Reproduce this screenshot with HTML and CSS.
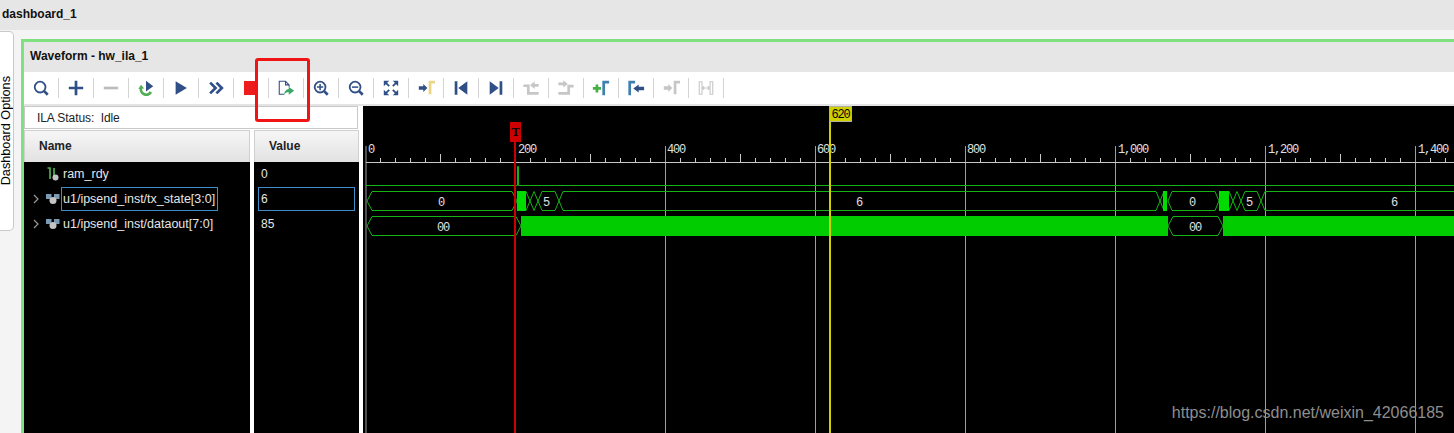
FILE: index.html
```html
<!DOCTYPE html>
<html lang="en">
<head>
<meta charset="utf-8">
<title>Waveform - hw_ila_1</title>
<link rel="stylesheet" href="styles.css">
</head>
<body>
<header class="top">dashboard_1</header>
<div class="main">
  <aside class="tab"><span class="tab-label">Dashboard Options</span></aside>
  <section class="panel">
    <div class="title">Waveform - hw_ila_1</div>
    <div class="toolbar">
      <div class="btn"><svg class="ic" viewBox="0 0 20 20"><circle cx="9" cy="9" r="6" class="s-blue"/><path d="M13.500 13.500l4 4" class="s-blue thick"/></svg></div>
      <div class="btn"><svg class="ic" viewBox="0 0 20 20"><path d="M2 10h16M10 2v16" class="s-blue thick"/></svg></div>
      <div class="btn"><svg class="ic" viewBox="0 0 20 20"><path d="M2 10h16" class="s-gray thick"/></svg></div>
      <div class="btn"><svg class="ic" viewBox="0 0 20 20"><path d="M4.500 10a6 6 0 0 0 11 4.500" class="s-green thick"/><path d="M1.500 11l3-4.500 3.500 4z" class="f-green"/><path d="M10 2l8 6-8 6z" class="f-blue"/></svg></div>
      <div class="btn"><svg class="ic" viewBox="0 0 20 20"><path d="M4 2.500l12.500 7.500-12.500 7.500z" class="f-blue"/></svg></div>
      <div class="btn"><svg class="ic" viewBox="0 0 20 20"><path d="M3.500 4l6 6-6 6M10.500 4l6 6-6 6" class="s-blue thick"/></svg></div>
      <div class="btn"><span class="stop"></span></div>
      <div class="btn"><svg class="ic" viewBox="0 0 20 20"><path d="M8 17H2.500V2.500h7l4 4v2M9.500 2.500v4h4" class="s-blue thin"/><path d="M8 17.500c0-4 2.500-6 5-6.500V8.500l6 4.500-6 4.500V14.500c-2 0-4 1-5 3z" class="f-green2"/></svg></div>
      <div class="btn"><svg class="ic" viewBox="0 0 20 20"><circle cx="9" cy="9" r="6" class="s-blue"/><path d="M13.500 13.500l4 4" class="s-blue thick"/><path d="M5.500 9h7M9 5.500v7" class="s-blue mid"/></svg></div>
      <div class="btn"><svg class="ic" viewBox="0 0 20 20"><circle cx="9" cy="9" r="6" class="s-blue"/><path d="M13.500 13.500l4 4" class="s-blue thick"/><path d="M5.500 9h7" class="s-blue mid"/></svg></div>
      <div class="btn"><svg class="ic" viewBox="0 0 20 20"><path d="M2 2h6L2 8zM18 2v6l-6-6zM2 18v-6l6 6zM18 18h-6l6-6z" class="f-blue"/><path d="M4 4l4 4M16 4l-4 4M4 16l4-4M16 16l-4-4" class="s-blue"/></svg></div>
      <div class="btn"><svg class="ic" viewBox="0 0 20 20"><path d="M2 8h5V5.500l4.500 4.500L7 14.500V12H2z" class="f-blue"/><path d="M14.500 17V3.500H20" class="s-yellow thick"/></svg></div>
      <div class="btn"><svg class="ic" viewBox="0 0 20 20"><path d="M3 2.500h3v15H3z" class="f-blue"/><path d="M17 2.500v15l-10-7.500z" class="f-blue"/></svg></div>
      <div class="btn"><svg class="ic" viewBox="0 0 20 20"><path d="M3 2.500l10 7.500-10 7.500z" class="f-blue"/><path d="M14 2.500h3v15h-3z" class="f-blue"/></svg></div>
      <div class="btn"><svg class="ic" viewBox="0 0 20 20"><path d="M1.500 7.500h5.500V16h11.500" class="s-lgray thick"/><path d="M9 7l5-4.500v3h4.500v3H14V11z" class="f-lgray"/></svg></div>
      <div class="btn"><svg class="ic" viewBox="0 0 20 20"><path d="M1.500 16h11.500V8h5.500" class="s-lgray thick"/><path d="M1.500 4H7V1.500L12 5.500 7 9.500V7H1.500z" class="f-lgray"/></svg></div>
      <div class="btn"><svg class="ic" viewBox="0 0 20 20"><path d="M1 10.500h9M5.500 6v9" class="s-green3 thick"/><path d="M13 18V3.500h6" class="s-steel thick"/></svg></div>
      <div class="btn"><svg class="ic" viewBox="0 0 20 20"><path d="M3 18V3.500h6" class="s-steel thick"/><path d="M19 8.500h-6V6l-6 4.500 6 4.500v-2.500h6z" class="f-blue"/></svg></div>
      <div class="btn"><svg class="ic" viewBox="0 0 20 20"><path d="M2 8h5V5.500l4.500 4.500L7 14.500V12H2z" class="f-lgray"/><path d="M14.500 17V3.500H20" class="s-lgray thick"/></svg></div>
      <div class="btn"><svg class="ic" viewBox="0 0 20 20"><path d="M2.500 3v14h3V3zM14.500 3v14h3V3z" class="s-lgray thin"/><path d="M6 10h8M8 8l-2 2 2 2M12 8l2 2-2 2" class="s-lgray thin"/></svg></div>
    </div>
    <div class="body">
      <div class="left">
        <div class="status">ILA Status:&nbsp; Idle</div>
        <div class="cols">
          <div class="col col-name">
            <div class="head">Name</div>
            <div class="row"><span class="twist"></span><svg class="sig" viewBox="0 0 14 14"><path d="M1.500 1h2.500v11M8 12V1" class="s-green mid"/><circle cx="9.500" cy="10.500" r="3" class="f-silver"/></svg><span class="label">ram_rdy</span></div>
            <div class="row"><span class="twist"><svg class="chev" viewBox="0 0 8 10"><path d="M2 1l4 4-4 4" class="s-chev"/></svg></span><svg class="sig" viewBox="0 0 14 14"><path d="M0 2h5.500v5H0zM8 2h5.500v5H8z" class="f-steel"/><circle cx="7" cy="8.500" r="3.500" class="f-silver"/></svg><span class="label selected">u1/ipsend_inst/tx_state[3:0]</span></div>
            <div class="row"><span class="twist"><svg class="chev" viewBox="0 0 8 10"><path d="M2 1l4 4-4 4" class="s-chev"/></svg></span><svg class="sig" viewBox="0 0 14 14"><path d="M0 2h5.500v5H0zM8 2h5.500v5H8z" class="f-steel"/><circle cx="7" cy="8.500" r="3.500" class="f-silver"/></svg><span class="label">u1/ipsend_inst/dataout[7:0]</span></div>
          </div>
          <div class="col col-value">
            <div class="head">Value</div>
            <div class="row"><span class="val">0</span></div>
            <div class="row"><span class="val val-selected">6</span></div>
            <div class="row"><span class="val">85</span></div>
          </div>
        </div>
      </div>
      <div class="wave">
        <svg class="wave-svg" viewBox="363 106 1091 327" width="1091" height="327">
          <g class="grid">
            <path d="M366 146V433M665.500 146V433M815.500 146V433M965.500 146V433M1115.500 146V433M1265.500 146V433M1415.500 146V433"/>
          </g>
          <g class="axis">
            <path d="M366 162.500H1454"/>
            <path id="ticks" d=""/>
          </g>
          <g class="ruler">
            <text x="368" y="153">0</text>
            <text x="518" y="153">200</text>
            <text x="667" y="153">400</text>
            <text x="817" y="153">600</text>
            <text x="967" y="153">800</text>
            <text x="1118" y="153">1,000</text>
            <text x="1268" y="153">1,200</text>
            <text x="1418" y="153">1,400</text>
          </g>
          <g class="trace">
            <path d="M366 185.500H517.500V166.500H518.500V185.500H1454"/>
            <path d="M372 191.500H512L517 201 512 210.500H372L367 201z"/>
            <path d="M526 191.500L534 210.500 542 191.500H555L563 210.500H1156L1164 191.500"/>
            <path d="M526 210.500L534 191.500 542 210.500H555L563 191.500H1156L1164 210.500"/>
            <path d="M1172 191.500H1215L1219 201 1215 210.500H1172L1168 201z"/>
            <path d="M1229 191.500L1237 210.500 1245 191.500H1257L1265 210.500H1454M1229 210.500L1237 191.500 1245 210.500H1257L1265 191.500H1454"/>
            <path d="M372 216.500H516L521 226 516 235.500H372L367 226z"/>
            <path d="M1173 216.500H1218L1223 226 1218 235.500H1173L1168 226z"/>
          </g>
          <g class="fill">
            <rect class="fill-b" x="517" y="191" width="9" height="20"/>
            <rect class="fill-b" x="1163" y="191" width="4" height="20"/>
            <rect class="fill-b" x="1219" y="191" width="10" height="20"/>
            <rect x="521" y="216" width="647" height="20"/>
            <rect x="1223" y="216" width="231" height="20"/>
          </g>
          <g class="vals">
            <text x="441" y="206">0</text>
            <text x="546" y="206">5</text>
            <text x="859" y="206">6</text>
            <text x="1192" y="206">0</text>
            <text x="1249" y="206">5</text>
            <text x="1394" y="206">6</text>
            <text x="443" y="231">00</text>
            <text x="1195" y="231">00</text>
          </g>
          <rect class="cur-red" x="514" y="122" width="2" height="311"/>
          <rect class="cur-red" x="510" y="122" width="11" height="20"/>
          <text class="t-mark" x="515.500" y="136">T</text>
          <rect class="cur-yellow" x="829" y="106" width="2" height="327"/>
          <rect class="flag-yellow" x="829.500" y="106.500" width="22" height="15"/>
          <text class="y-mark" x="840.500" y="118">620</text>
        </svg>
        <div class="watermark">https://blog.csdn.net/weixin_42066185</div>
      </div>
    </div>
  </section>
</div>
<div class="highlight"></div>
<script src="ticks.js"></script>
</body>
</html>
```
FILE: ticks.js
```js
var d = "";
for (var i = 0; i < 73; i++) {
  var x = 365.5 + i * 15;
  if (i % 10 === 0) continue;
  var h = i % 5 === 0 ? 8 : 4;
  d += "M" + x + " " + (162 - h) + "V162";
}
document.getElementById("ticks").setAttribute("d", d);
```
FILE: styles.css
```css
* { box-sizing: border-box; }
html, body { margin: 0; padding: 0; height: 100%; overflow: hidden; }
body {
  position: relative;
  background: #f4f4f4;
  font-family: "Liberation Sans", Arial, sans-serif;
  font-size: 12px;
  color: #000;
}
.top {
  height: 30px;
  background: #e6e6e6;
  padding: 7px 0 0 2px;
  font-weight: bold;
  font-size: 12px;
  line-height: 14px;
  color: #111;
}
.main {
  display: flex;
  align-items: flex-start;
  height: 403px;
}
.tab {
  width: 14px;
  height: 200px;
  margin-top: 1px;
  background: #fff;
  border: 1px solid #c8c8c8;
  border-left: 0;
  border-radius: 0 5px 5px 0;
  padding-top: 44px;
  display: flex;
  justify-content: flex-start;
  align-items: flex-start;
}
.tab-label {
  writing-mode: vertical-rl;
  transform: rotate(180deg);
  line-height: 12px;
  white-space: nowrap;
  font-size: 12.7px;
}
.panel {
  margin: 9px 0 0 7px;
  flex: 1;
  min-width: 0;
  height: 394px;
  border-top: 3px solid #7fe07f;
  border-left: 3px solid #7fe07f;
  background: #fff;
  display: flex;
  flex-direction: column;
}
.title {
  height: 30px;
  background: #e6e6e6;
  padding: 7px 0 0 6px;
  line-height: 14px;
  font-weight: bold;
  color: #111;
}
.toolbar {
  height: 32px;
  background: #fff;
  display: flex;
  align-items: center;
}
.btn {
  width: 35px;
  height: 20px;
  border-right: 1px solid #d4d4d4;
  display: flex;
  align-items: center;
  justify-content: center;
  flex: none;
}
.ic { width: 18px; height: 18px; display: block; }
.stop { width: 14px; height: 14px; background: #ee1c1c; display: block; }
.s-blue, .s-gray, .s-green, .s-lgray, .s-yellow, .s-green3, .s-steel, .s-chev { fill: none; stroke-width: 2; }
.s-blue { stroke: #2f4f86; }
.s-gray { stroke: #bdbdbd; }
.s-lgray { stroke: #c6c6c6; }
.s-green { stroke: #4fae4f; }
.s-green3 { stroke: #45b045; }
.s-yellow { stroke: #ecd585; }
.s-steel { stroke: #3f80b0; }
.s-chev { stroke: #9a9a9a; stroke-width: 1.2; }
.thick { stroke-width: 3; }
.mid { stroke-width: 1.7; }
.thin { stroke-width: 1.2; }
.f-blue { fill: #2f4f86; }
.f-green { fill: #4fae4f; }
.f-green2 { fill: #3aa864; }
.f-lgray { fill: #c6c6c6; }
.f-silver { fill: #c4c4c4; }
.f-steel { fill: #7b9bb5; }
.body {
  flex: 1;
  min-height: 0;
  display: flex;
  border-top: 2px solid #e4e4e4;
  background: #fff;
}
.left { width: 335px; flex: none; display: flex; flex-direction: column; }
.status {
  height: 23px;
  margin-right: 1px;
  border: 1px solid #c8c8c8;
  padding-left: 12px;
  line-height: 22px;
  letter-spacing: -0.08px;
  color: #222;
  background: #fff;
  flex: none;
}
.cols { flex: 1; display: flex; gap: 4px; margin-top: 1px; }
.col { background: #000; display: flex; flex-direction: column; }
.col-name { width: 226px; }
.col-value { width: 105px; }
.head {
  height: 32px;
  background: linear-gradient(#f6f6f6, #e2e2e2);
  border: 1px solid #d0d0d0;
  border-bottom: 0;
  font-weight: bold;
  color: #222;
  line-height: 30px;
  padding-left: 14px;
}
.row {
  height: 24px;
  margin-bottom: 1px;
  color: #e6e6e6;
  display: flex;
  align-items: center;
  flex: none;
}
.twist { width: 22px; padding-left: 8px; flex: none; display: flex; align-items: center; }
.chev { width: 8px; height: 10px; display: block; }
.sig { width: 14px; height: 14px; flex: none; display: block; }
.label {
  margin-left: 1px;
  padding: 0 2px 0 1px;
  font-size: 12.5px;
  white-space: nowrap;
  line-height: 22px;
  height: 24px;
  border: 1px solid transparent;
}
.selected { border-color: #3d8ec9; }
.val { margin-left: 4px; width: 97px; height: 24px; line-height: 22px; padding-left: 2px; border: 1px solid transparent; }
.val-selected { border-color: #3d8ec9; }
.wave {
  margin-left: 4px;
  flex: 1;
  min-width: 0;
  background: #000;
  position: relative;
  overflow: hidden;
}
.wave-svg { display: block; }
.grid path { stroke: #9e9e9e; fill: none; stroke-width: 1; }
.axis path { stroke: #c8c8c8; fill: none; stroke-width: 1; }
.ruler text, .vals text {
  font-family: "Liberation Mono", "DejaVu Sans Mono", monospace;
  font-size: 12px;
  letter-spacing: -1.2px;
  fill: #e0e0e0;
}
.vals text { text-anchor: middle; }
.trace path { stroke: #14b414; fill: none; stroke-width: 1; }
.fill rect { fill: #00cc00; }
.fill .fill-b { fill: #00dc00; }
.cur-red { fill: #cc0000; }
.cur-yellow { fill: #d0d000; }
.flag-yellow { fill: #d0d000; stroke: #b0b0a0; stroke-width: 1; }
.t-mark {
  font-family: "DejaVu Serif", serif;
  font-weight: bold;
  font-size: 11px;
  fill: #000;
  text-anchor: middle;
}
.y-mark {
  font-family: "Liberation Mono", monospace;
  font-size: 12px;
  letter-spacing: -1.2px;
  fill: #000;
  text-anchor: middle;
}
.watermark {
  position: absolute;
  right: 10px;
  top: 298px;
  color: #8e8e8e;
  font-size: 16px;
  line-height: 18px;
  white-space: nowrap;
}
.highlight {
  position: absolute;
  left: 255px;
  top: 58px;
  width: 55px;
  height: 64px;
  border: 3px solid #f01414;
  border-radius: 3px;
}
```
